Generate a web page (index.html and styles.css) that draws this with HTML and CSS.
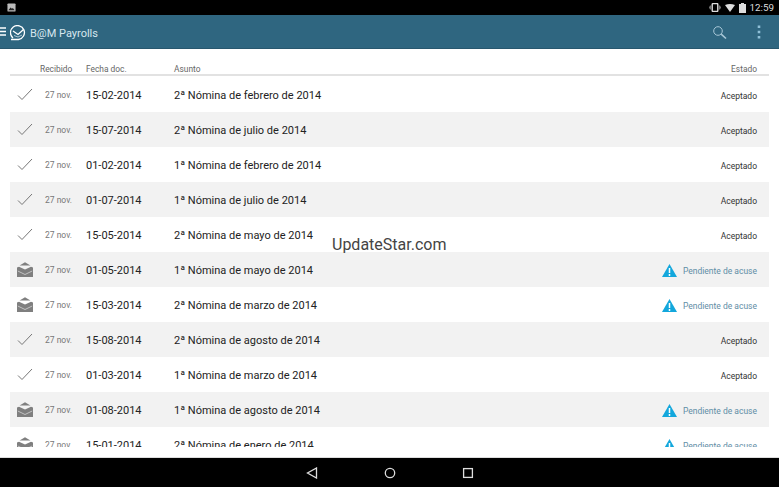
FILE: index.html
```html
<!DOCTYPE html>
<html lang="es">
<head>
    <meta charset="UTF-8">
    <title>B@M Payrolls</title>
    <link rel="stylesheet" href="styles.css">
</head>
<body>
    <svg class="defs" width="0" height="0">
        <symbol id="check" viewBox="0 0 16 13"><path d="M1 7.5 L5 11.5 L15 1" fill="none" stroke="#777" stroke-width="1"/></symbol>
        <symbol id="mail" viewBox="0 0 16 15"><path d="M2.5 3.6 L8 0.3 L13.5 3.6 Z" fill="#7f7f7f"/><path d="M0 5.5 L2 4.7 L8 7.5 L14 4.7 L16 5.5 V15 H0 Z" fill="#7f7f7f"/><path d="M0.8 9 L8 12.5 L15.2 9" fill="none" stroke="#e0e0e0" stroke-width="0.7"/></symbol>
        <symbol id="warn" viewBox="0 0 15 13"><path d="M7.5 0 L15 13 H0 Z" fill="#13a7dc"/><path d="M7.5 4 V9 M7.5 10 V12" stroke="#fff" stroke-width="1.5"/></symbol>
    </svg>

    <div class="screen">
        <div class="status-bar">
            <svg width="9" height="9" viewBox="0 0 10 10"><rect x="0.5" y="0.5" width="9" height="9" rx="1" fill="#bbb"/><path d="M1.5 8 L4 5 L5.5 6.5 L6.5 5.5 L8.5 8 Z" fill="#222"/></svg>
            <div class="status-right">
                <svg width="12" height="9" viewBox="0 0 12 9"><rect x="3.2" y="0.5" width="5.6" height="8" rx="1" fill="none" stroke="#ddd" stroke-width="1.4"/><path d="M1.4 2.5 V6.5 M0.3 3.5 V5.5 M10.6 2.5 V6.5 M11.7 3.5 V5.5" stroke="#bbb" stroke-width="0.7"/></svg>
                <svg width="10" height="8" viewBox="0 0 10 8"><path d="M0 1 Q5 -1 10 1 L5 8 Z" fill="#ddd"/></svg>
                <svg width="7" height="10" viewBox="0 0 7 10"><path d="M2 0 H5 V1 H7 V10 H0 V1 H2 Z" fill="#ddd"/></svg>
                <span class="clock">12:59</span>
            </div>
        </div>

        <div class="app-bar">
            <svg class="menu-icon" width="6" height="9" viewBox="0 0 6 9"><path d="M0 1 H6 M0 4.5 H6 M0 8 H6" stroke="#fff" stroke-width="1.4"/></svg>
            <svg class="logo" width="16" height="16" viewBox="0 0 16 16"><path d="M3 13 A7 7 0 1 1 8.5 14.5 H1" fill="none" stroke="#fff" stroke-width="1.3"/><path d="M3 6 L8 9.5 L13.5 4.5" fill="none" stroke="#fff" stroke-width="1.3"/><path d="M4 10.5 L8 12 L12 10" fill="none" stroke="#cfe0e8" stroke-width="0.8"/></svg>
            <span class="app-title">B@M Payrolls</span>
            <svg class="search-icon" width="15" height="15" viewBox="0 0 15 15"><circle cx="6" cy="6" r="4.3" fill="none" stroke="#a9c8d8" stroke-width="1"/><path d="M9.2 9.2 L14 13.5" stroke="#a9c8d8" stroke-width="1.6"/></svg>
            <svg class="more-icon" width="4" height="14" viewBox="0 0 4 14"><path d="M2 0.5 V3 M2 5.7 V8.2 M2 11 V13.5" stroke="#8fc0d8" stroke-width="2.6"/></svg>
        </div>

        <div class="content">
            <div class="list-head">
                <span class="col-rec">Recibido</span>
                <span class="col-date">Fecha doc.</span>
                <span class="col-subject">Asunto</span>
                <span class="col-state">Estado</span>
            </div>
            <div class="rows">
                <div class="row">
                    <svg class="ico check"><use href="#check"/></svg>
                    <span class="col-rec">27 nov.</span><span class="col-date">15-02-2014</span><span class="col-subject">2ª Nómina de febrero de 2014</span><span class="col-state">Aceptado</span>
                </div>
                <div class="row">
                    <svg class="ico check"><use href="#check"/></svg>
                    <span class="col-rec">27 nov.</span><span class="col-date">15-07-2014</span><span class="col-subject">2ª Nómina de julio de 2014</span><span class="col-state">Aceptado</span>
                </div>
                <div class="row">
                    <svg class="ico check"><use href="#check"/></svg>
                    <span class="col-rec">27 nov.</span><span class="col-date">01-02-2014</span><span class="col-subject">1ª Nómina de febrero de 2014</span><span class="col-state">Aceptado</span>
                </div>
                <div class="row">
                    <svg class="ico check"><use href="#check"/></svg>
                    <span class="col-rec">27 nov.</span><span class="col-date">01-07-2014</span><span class="col-subject">1ª Nómina de julio de 2014</span><span class="col-state">Aceptado</span>
                </div>
                <div class="row">
                    <svg class="ico check"><use href="#check"/></svg>
                    <span class="col-rec">27 nov.</span><span class="col-date">15-05-2014</span><span class="col-subject">2ª Nómina de mayo de 2014</span><span class="col-state">Aceptado</span>
                </div>
                <div class="row">
                    <svg class="ico mail"><use href="#mail"/></svg>
                    <span class="col-rec">27 nov.</span><span class="col-date">01-05-2014</span><span class="col-subject">1ª Nómina de mayo de 2014</span>
                    <span class="pending"><svg class="warn"><use href="#warn"/></svg>Pendiente de acuse</span>
                </div>
                <div class="row">
                    <svg class="ico mail"><use href="#mail"/></svg>
                    <span class="col-rec">27 nov.</span><span class="col-date">15-03-2014</span><span class="col-subject">2ª Nómina de marzo de 2014</span>
                    <span class="pending"><svg class="warn"><use href="#warn"/></svg>Pendiente de acuse</span>
                </div>
                <div class="row">
                    <svg class="ico check"><use href="#check"/></svg>
                    <span class="col-rec">27 nov.</span><span class="col-date">15-08-2014</span><span class="col-subject">2ª Nómina de agosto de 2014</span><span class="col-state">Aceptado</span>
                </div>
                <div class="row">
                    <svg class="ico check"><use href="#check"/></svg>
                    <span class="col-rec">27 nov.</span><span class="col-date">01-03-2014</span><span class="col-subject">1ª Nómina de marzo de 2014</span><span class="col-state">Aceptado</span>
                </div>
                <div class="row">
                    <svg class="ico mail"><use href="#mail"/></svg>
                    <span class="col-rec">27 nov.</span><span class="col-date">01-08-2014</span><span class="col-subject">1ª Nómina de agosto de 2014</span>
                    <span class="pending"><svg class="warn"><use href="#warn"/></svg>Pendiente de acuse</span>
                </div>
                <div class="row">
                    <svg class="ico mail"><use href="#mail"/></svg>
                    <span class="col-rec">27 nov.</span><span class="col-date">15-01-2014</span><span class="col-subject">2ª Nómina de enero de 2014</span>
                    <span class="pending"><svg class="warn"><use href="#warn"/></svg>Pendiente de acuse</span>
                </div>
            </div>
            <div class="watermark">UpdateStar.com</div>
        </div>

        <div class="nav-bar">
            <svg width="12" height="12" viewBox="0 0 12 12"><path d="M10.5 1 V11 L1.5 6 Z" fill="none" stroke="#ddd" stroke-width="1.3"/></svg>
            <svg width="12" height="12" viewBox="0 0 12 12"><circle cx="6" cy="6" r="4.7" fill="none" stroke="#ddd" stroke-width="1.3"/></svg>
            <svg width="12" height="12" viewBox="0 0 12 12"><rect x="1.6" y="1.6" width="8.8" height="8.8" fill="none" stroke="#ddd" stroke-width="1.3"/></svg>
        </div>
    </div>
</body>
</html>
```

FILE: styles.css
```css
html, body {
    margin: 0;
    padding: 0;
    background: #000;
}

.defs {
    display: block;
    height: 0;
}

.screen {
    display: flex;
    flex-direction: column;
    width: 779px;
    height: 487px;
    overflow: hidden;
    font-family: Roboto, "Liberation Sans", sans-serif;
}

.status-bar {
    display: flex;
    align-items: center;
    justify-content: space-between;
    height: 15px;
    padding: 0 5px 0 7px;
    background: #000;
}

.status-right {
    display: flex;
    align-items: center;
    gap: 4px;
}

.clock {
    color: #ddd;
    font-size: 9.8px;
}

.app-bar {
    display: flex;
    align-items: center;
    height: 34px;
    background: #2f6680;
    border-bottom: 1px solid #28576e;
    box-sizing: border-box;
}

.menu-icon { margin-right: 4px; }

.logo {
    margin: 2px 4px 0 0;
}

.app-title {
    flex: 1;
    margin-top: 3px;
    color: #d7e6ee;
    font-size: 11px;
}

.search-icon {
    margin: 2px 30px 0 0;
}

.more-icon { margin-right: 18px; }

.content {
    position: relative;
    flex: 1;
    min-height: 0;
    background: #fff;
    overflow: hidden;
    padding: 0 10px;
}

.list-head {
    position: relative;
    height: 27px;
    margin-bottom: 1px;
    border-bottom: 2px solid #e2e2e2;
    box-sizing: border-box;
    font-size: 8.4px;
    color: #666;
}

.list-head span {
    position: absolute;
    top: 15px;
}

.list-head .col-rec { left: 30px; }
.list-head .col-date { left: 76px; }
.list-head .col-subject { left: 164px; }
.list-head .col-state { right: 12px; }

/* last row is cut by the scroll area, white gap stays below it */
.rows {
    height: 370px;
    overflow: hidden;
}

.row {
    display: flex;
    align-items: center;
    height: 35px;
    box-sizing: border-box;
    padding-left: 7px;
    padding-right: 12px;
}

.row:nth-child(even) { background: #f2f2f2; }

.row > span { margin-top: 2px; }

.ico { flex: none; }
.check { width: 16px; height: 13px; }
.mail { width: 16px; height: 15px; }
.warn { width: 15px; height: 13px; }

.row .col-rec {
    width: 41px;
    margin-top: 0;
    margin-left: 12px;
    font-size: 8.5px;
    color: #777;
}

.row .col-date {
    width: 88px;
    font-size: 11px;
    color: #222;
}

.row .col-subject {
    flex: 1;
    font-size: 11px;
    color: #222;
}

.row .col-state {
    font-size: 8.5px;
    color: #333;
}

.pending {
    display: flex;
    align-items: center;
    gap: 6px;
    font-size: 8.5px;
    color: #5f8ea6;
}

.watermark {
    position: absolute;
    left: 332px;
    top: 186px;
    font-size: 16px;
    color: #444;
}

.nav-bar {
    display: flex;
    align-items: center;
    justify-content: center;
    gap: 66px;
    height: 30px;
    background: #000;
    border-top: 1px solid #ddd;
    box-sizing: border-box;
}
```
